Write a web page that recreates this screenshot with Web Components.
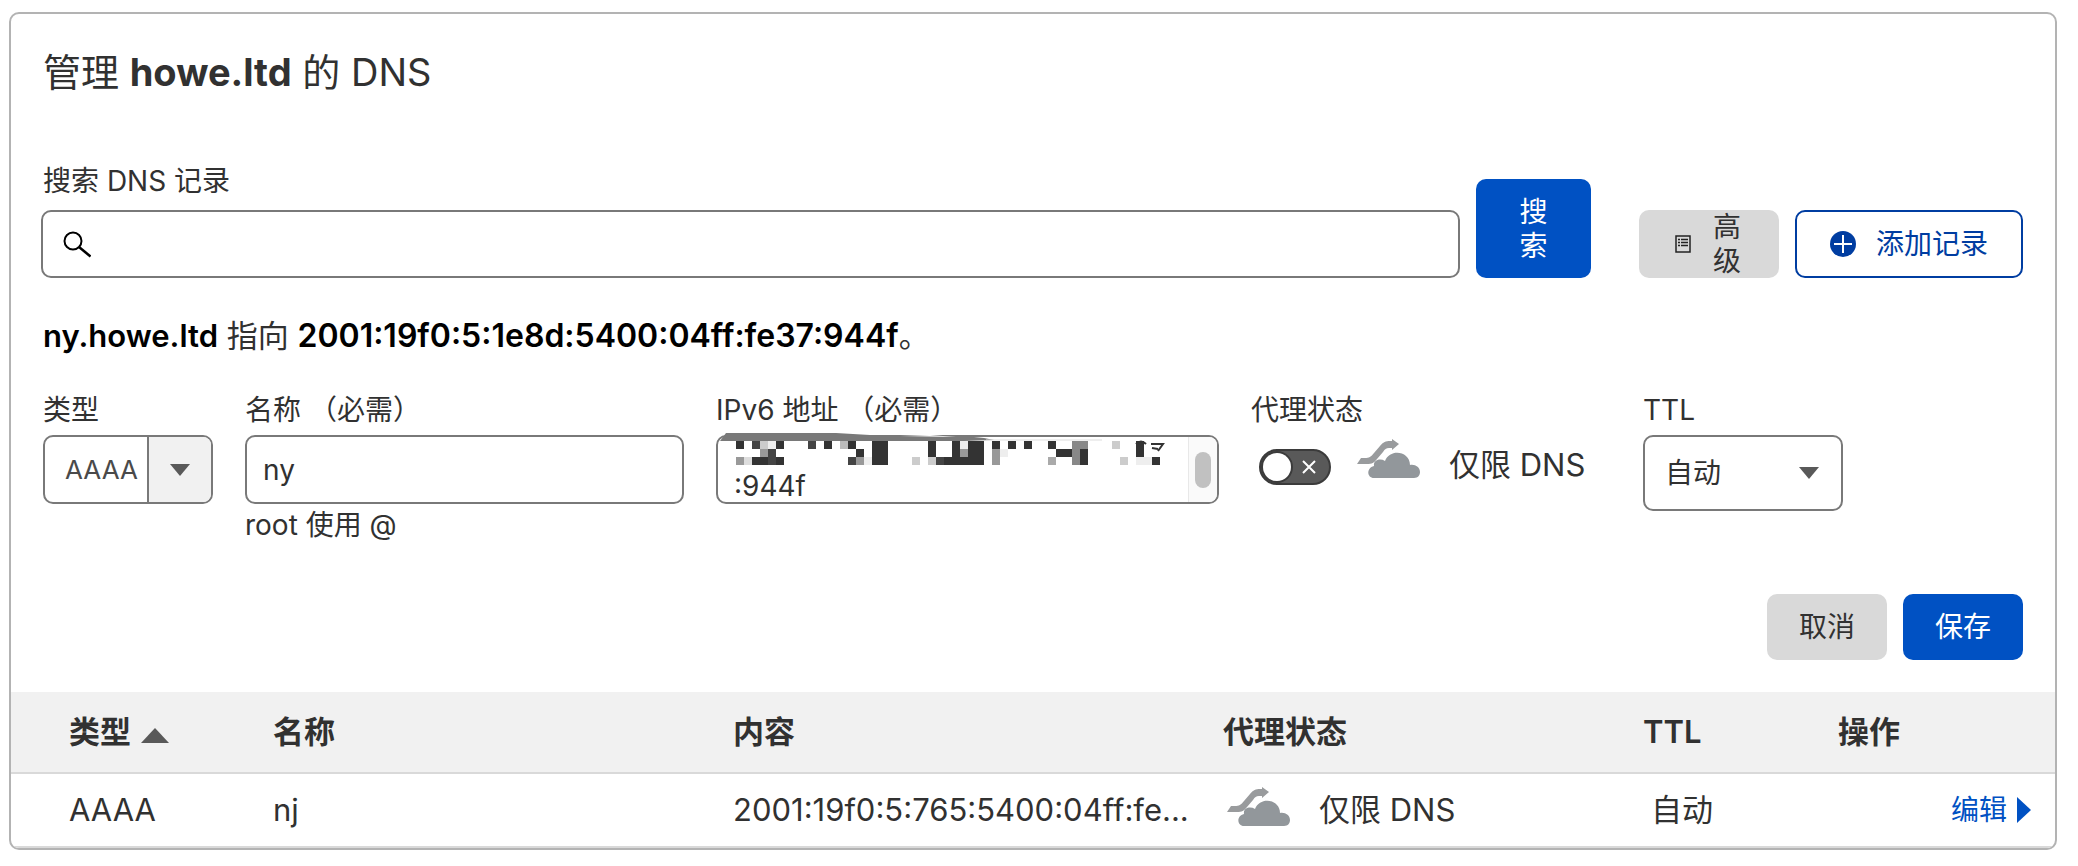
<!DOCTYPE html>
<html lang="zh-CN">
<head>
<meta charset="utf-8">
<meta name="viewport" content="width=device-width, initial-scale=1">
<title>DNS</title>
<style>
    :root {
        --text: #313131;
        --blue: #0051c3;
        --blue-dark: #003da1;
        --line: #797979;
        --grey: #d9d9d9;
        --arrow: #595959;
    }
    body {
        margin: 0;
        padding: 12px 21px 15px 9px;
        background: #fff;
        color: var(--text);
        font-family: Inter, "Noto Sans CJK SC", sans-serif;
        font-size: 28px;
        line-height: 34px;
    }
</style>
</head>
<body>
<dns-card>
    <span slot="title">管理 <b>howe.ltd</b> 的 DNS</span>
    <dns-search></dns-search>
    <record-form></record-form>
    <records-table slot="table"></records-table>
</dns-card>

<script>
class DnsCard extends HTMLElement {
    constructor() {
        super();
        this.attachShadow({mode: 'open'});
    }

    connectedCallback() {
        this.shadowRoot.innerHTML = `
            <style>
                :host {
                    display: block;
                    border: 2px solid #b3b3b3;
                    border-radius: 10px;
                    overflow: hidden;
                }
                .body {
                    padding: 32px;
                }
                h1 {
                    margin: 0 0 66px;
                    font-size: 38px;
                    line-height: 52px;
                    font-weight: 400;
                }
            </style>
            <div class="body">
                <h1><slot name="title"></slot></h1>
                <slot></slot>
            </div>
            <slot name="table"></slot>`
    }
}

class DnsButton extends HTMLElement {
    constructor() {
        super();
        this.attachShadow({mode: 'open'});
    }

    connectedCallback() {
        this.shadowRoot.innerHTML = `
            <style>
                :host {
                    display: block;
                }
                button {
                    display: flex;
                    align-items: center;
                    justify-content: center;
                    box-sizing: border-box;
                    width: 100%;
                    height: 100%;
                    padding: 0;
                    border: 0;
                    border-radius: 10px;
                    background: var(--grey);
                    color: var(--text);
                    font: inherit;
                    cursor: pointer;
                }
                :host([kind="primary"]) button {
                    background: var(--blue);
                    color: #fff;
                }
                :host([kind="outline"]) button {
                    border: 2px solid var(--blue-dark);
                    background: #fff;
                    color: var(--blue-dark);
                }
                ::slotted(svg) {
                    flex: none;
                    margin-right: 20px;
                }
            </style>
            <button type="button"><slot name="icon"></slot><slot></slot></button>`
    }
}

class DnsSearch extends HTMLElement {
    constructor() {
        super();
        this.attachShadow({mode: 'open'});
    }

    connectedCallback() {
        this.shadowRoot.innerHTML = `
            <style>
                :host {
                    display: flex;
                    align-items: flex-end;
                    gap: 16px;
                    margin: 0 0 36px -2px;
                }
                .field {
                    flex: 1;
                }
                label {
                    display: block;
                    margin: 0 0 12px 2px;
                }
                .box {
                    display: flex;
                    align-items: center;
                    gap: 16px;
                    box-sizing: border-box;
                    height: 68px;
                    padding: 0 20px;
                    border: 2px solid var(--line);
                    border-radius: 10px;
                }
                input {
                    flex: 1;
                    border: 0;
                    outline: 0;
                    font: inherit;
                    color: inherit;
                }
                .search {
                    width: 115px;
                    height: 99px;
                    margin-right: 32px;
                }
                .advanced {
                    width: 140px;
                    height: 68px;
                }
                .add {
                    width: 228px;
                    height: 68px;
                }
                .stack {
                    width: 28px;
                }
                .advanced .stack {
                    margin-right: 4px;
                }
            </style>
            <div class="field">
                <label for="query">搜索 DNS 记录</label>
                <div class="box">
                    <svg width="28" height="28" viewBox="0 0 28 28" fill="none" stroke="#000" stroke-width="2">
                        <circle cx="10" cy="11" r="8.500"/>
                        <path d="M16 17l11.500 9.500" stroke-width="2.500"/>
                    </svg>
                    <input id="query" type="text">
                </div>
            </div>
            <dns-button class="search" kind="primary"><span class="stack">搜索</span></dns-button>
            <dns-button class="advanced">
                <svg slot="icon" width="20" height="20" viewBox="0 0 20 20" fill="none" stroke="#222">
                    <rect x="3" y="2" width="14" height="16" stroke-width="1.500"/>
                    <path d="M8 5.500h7M8 8.500h7M8 11.500h7M5 5.500h2M5 8.500h2M5 11.500h2" stroke-width="1.500"/>
                </svg>
                <span class="stack">高级</span>
            </dns-button>
            <dns-button class="add" kind="outline">
                <svg slot="icon" width="26" height="26" viewBox="0 0 26 26">
                    <circle cx="13" cy="13" r="13" fill="#003da1"/>
                    <path d="M13 4v18M4 13h18" stroke="#fff" stroke-width="2"/>
                </svg>
                <span>添加记录</span>
            </dns-button>`
    }
}

class SelectField extends HTMLElement {
    constructor() {
        super();
        this.attachShadow({mode: 'open'});
    }

    connectedCallback() {
        const label = this.getAttribute('label');
        const value = this.getAttribute('value');
        this.shadowRoot.innerHTML = `
            <style>
                :host {
                    display: block;
                }
                label {
                    display: block;
                    margin-bottom: 8px;
                }
                .box {
                    display: grid;
                    grid-template-columns: 1fr 64px;
                    align-items: center;
                    box-sizing: border-box;
                    height: 76px;
                    border: 2px solid var(--line);
                    border-radius: 10px;
                    overflow: hidden;
                }
                select {
                    grid-area: 1 / 1 / 2 / 3;
                    height: 100%;
                    padding: 0 0 0 20px;
                    border: 0;
                    outline: 0;
                    appearance: none;
                    background: none;
                    color: inherit;
                    font: inherit;
                }
                .arrow {
                    grid-area: 1 / 2;
                    display: flex;
                    align-items: center;
                    justify-content: center;
                    box-sizing: border-box;
                    height: 100%;
                    pointer-events: none;
                }
                :host([split]) .box {
                    height: 69px;
                }
                :host([split]) select {
                    color: #4a4a4a;
                    font-size: 26px;
                }
                :host([split]) .arrow {
                    border-left: 2px solid var(--line);
                    background: #f1f1f1;
                }
            </style>
            <label for="choice">${label}</label>
            <div class="box">
                <select id="choice"><option>${value}</option></select>
                <span class="arrow">
                    <svg width="20" height="12" viewBox="0 0 20 12"><path d="M0 0h20L10 12z" fill="#595959"/></svg>
                </span>
            </div>`
    }
}

class NameField extends HTMLElement {
    constructor() {
        super();
        this.attachShadow({mode: 'open'});
    }

    connectedCallback() {
        this.shadowRoot.innerHTML = `
            <style>
                :host {
                    display: block;
                }
                label {
                    display: block;
                    margin-bottom: 8px;
                }
                input {
                    display: block;
                    box-sizing: border-box;
                    width: 100%;
                    height: 69px;
                    padding: 0 16px;
                    border: 2px solid var(--line);
                    border-radius: 10px;
                    outline: 0;
                    color: inherit;
                    font: inherit;
                }
                p {
                    margin: 4px 0 0;
                }
            </style>
            <label for="name">名称 （必需）</label>
            <input id="name" type="text" value="ny">
            <p>root 使用 @</p>`
    }
}

// every entry is [column, row, columns, rows, grey level] on an 8px grid
const MOSAIC = [
    [0, 0, 1, 1, '3'], [2, 0, 1, 1, '4'], [3, 0, 1, 1, 'c'], [4, 0, 1, 1, 'e'], [5, 0, 1, 1, '3'],
    [9, 0, 1, 1, '4'], [11, 0, 1, 1, '3'], [13, 0, 1, 1, 'b'], [14, 0, 1, 1, '3'], [17, 0, 2, 3, '3'],
    [24, 0, 1, 2, '3'], [27, 0, 1, 3, '3'], [28, 0, 1, 1, 'e'], [29, 0, 2, 3, '3'], [32, 0, 1, 1, '3'],
    [34, 0, 1, 1, '3'], [36, 0, 1, 1, '3'], [39, 0, 1, 1, '3'], [42, 0, 2, 1, '8'], [47, 0, 1, 1, 'c'],
    [3, 1, 1, 1, '9'], [4, 1, 1, 1, '4'], [15, 1, 1, 1, '3'], [28, 1, 1, 1, '9'], [32, 1, 1, 2, '9'],
    [33, 1, 1, 1, 'e'], [40, 1, 2, 1, '3'], [42, 1, 1, 2, '8'], [43, 1, 1, 2, '3'], [50, 0, 1, 2, '3'],
    [0, 2, 1, 1, '9'], [1, 2, 1, 1, 'd'], [2, 2, 2, 1, '3'], [4, 2, 1, 1, '4'], [5, 2, 1, 1, '3'],
    [14, 2, 1, 1, '4'], [15, 2, 1, 1, '9'], [16, 2, 1, 1, 'e'], [22, 2, 1, 1, 'c'], [24, 2, 1, 1, 'c'],
    [25, 2, 1, 1, '4'], [26, 2, 1, 1, '3'], [28, 2, 1, 1, '3'], [39, 2, 1, 1, 'a'], [48, 2, 1, 1, 'c'],
    [50, 2, 1, 1, 'e'], [51, 2, 1, 1, 'e'], [52, 2, 1, 1, '3']
];

class AddressField extends HTMLElement {
    constructor() {
        super();
        this.attachShadow({mode: 'open'});
    }

    connectedCallback() {
        const cells = MOSAIC.map(([x, y, w, h, c]) =>
            `<rect x="${20 + x * 8}" y="${8 + y * 8}" width="${w * 8}" height="${h * 8}" fill="#${c}${c}${c}"/>`
        ).join('');
        this.shadowRoot.innerHTML = `
            <style>
                :host {
                    display: block;
                }
                label {
                    display: block;
                    margin-bottom: 8px;
                }
                .box {
                    position: relative;
                    display: flex;
                    box-sizing: border-box;
                    height: 69px;
                    border: 2px solid var(--line);
                    border-radius: 10px;
                }
                textarea {
                    flex: 1;
                    min-width: 0;
                    padding: 33px 16px 0;
                    border: 0;
                    outline: 0;
                    resize: none;
                    overflow: hidden;
                    background: none;
                    color: inherit;
                    font: inherit;
                    line-height: 32px;
                }
                .bar {
                    display: flex;
                    align-items: center;
                    justify-content: center;
                    box-sizing: border-box;
                    width: 29px;
                    border-left: 1px solid #e8e8e8;
                    border-radius: 0 8px 8px 0;
                    background: #fafafa;
                }
                .thumb {
                    width: 16px;
                    height: 36px;
                    border-radius: 8px;
                    background: #c1c1c1;
                }
                .mask {
                    position: absolute;
                    top: -4px;
                    left: -2px;
                    pointer-events: none;
                }
            </style>
            <label for="address">IPv6 地址 （必需）</label>
            <div class="box">
                <textarea id="address">:944f</textarea>
                <div class="bar"><div class="thumb"></div></div>
                <svg class="mask" width="460" height="40" viewBox="0 0 460 40">
                    <path d="M4 8L10 0h110l34 2h84l30 3 10 2-30 1z" fill="#797979"/>
                    <path d="M184 3l30-1 26 2z" fill="#fff"/>
                    <path d="M270 7h116" stroke="#ddd"/>
                    ${cells}
                    <path d="M420 11q5-5 10 0M435 11h12l-5 7M436 15l6 1" fill="none" stroke="#333" stroke-width="2"/>
                </svg>
            </div>`
    }
}

class CloudIcon extends HTMLElement {
    constructor() {
        super();
        this.attachShadow({mode: 'open'});
    }

    connectedCallback() {
        this.shadowRoot.innerHTML = `
            <style>
                :host {
                    display: block;
                    flex: none;
                    width: 64px;
                    height: 40px;
                }
                svg {
                    display: block;
                }
            </style>
            <svg width="64" height="40" viewBox="0 0 64 40">
                <path d="M4 19h4c4 0 6-1 9-5l6-7c3-4 6-5 10-5h2V0l7 5-7 6V9h-3c-3 0-4 1-6 4l-6 7c-3 4-5 5-10 5H0z" fill="#999b9d"/>
                <path d="M17 39c-7 0-8-10 0-12-1-6 6-8 11-5 5-13 25-10 25 4 5-1 10 2 10 7 0 3-2 6-6 6z" fill="#92979b"/>
            </svg>`
    }
}

class ProxyField extends HTMLElement {
    constructor() {
        super();
        this.attachShadow({mode: 'open'});
    }

    connectedCallback() {
        this.shadowRoot.innerHTML = `
            <style>
                :host {
                    display: block;
                }
                label {
                    display: block;
                    margin-bottom: 8px;
                }
                .row {
                    display: flex;
                    align-items: center;
                    padding: 0 8px;
                    height: 60px;
                    font-size: 31px;
                }
                .toggle {
                    display: grid;
                    margin: 4px 26px 0 0;
                }
                .toggle > * {
                    grid-area: 1 / 1;
                }
                input {
                    appearance: none;
                    box-sizing: border-box;
                    width: 72px;
                    height: 36px;
                    margin: 0;
                    border: 2px solid #3b3b3b;
                    border-radius: 18px;
                    background: #595959;
                }
                svg {
                    pointer-events: none;
                }
                cloud-icon {
                    margin: 0 28px 12px 0;
                }
            </style>
            <label for="proxy">代理状态</label>
            <div class="row">
                <div class="toggle">
                    <input id="proxy" type="checkbox">
                    <svg width="72" height="36" viewBox="0 0 72 36">
                        <circle cx="18" cy="18" r="16" fill="#3b3b3b"/>
                        <circle cx="18" cy="18" r="14" fill="#fff"/>
                        <path d="M44 12l12 12M56 12L44 24" stroke="#fff" stroke-width="2"/>
                    </svg>
                </div>
                <cloud-icon></cloud-icon>
                <span>仅限 DNS</span>
            </div>`
    }
}

class RecordForm extends HTMLElement {
    constructor() {
        super();
        this.attachShadow({mode: 'open'});
    }

    connectedCallback() {
        this.shadowRoot.innerHTML = `
            <style>
                :host {
                    display: block;
                }
                .summary {
                    margin: 0 0 35px;
                    font-size: 31px;
                    line-height: 44px;
                }
                .summary b {
                    color: #000;
                    font-weight: 600;
                }
                .summary .address {
                    font-size: 32px;
                }
                .fields {
                    display: grid;
                    grid-template-columns: 170px 439fr 503fr 360px 200px 148px;
                    gap: 32px;
                    align-items: start;
                }
                .actions {
                    display: flex;
                    justify-content: flex-end;
                    gap: 16px;
                    margin-top: 52px;
                }
                .actions dns-button {
                    width: 120px;
                    height: 66px;
                }
            </style>
            <p class="summary"><b>ny.howe.ltd</b> 指向 <b class="address">2001:19f0:5:1e8d:5400:04ff:fe37:944f</b>。</p>
            <div class="fields">
                <select-field label="类型" value="AAAA" split></select-field>
                <name-field></name-field>
                <address-field></address-field>
                <proxy-field></proxy-field>
                <select-field label="TTL" value="自动"></select-field>
            </div>
            <div class="actions">
                <dns-button>取消</dns-button>
                <dns-button kind="primary">保存</dns-button>
            </div>`
    }
}

class RecordsTable extends HTMLElement {
    constructor() {
        super();
        this.attachShadow({mode: 'open'});
    }

    connectedCallback() {
        this.shadowRoot.innerHTML = `
            <style>
                :host {
                    display: block;
                }
                table {
                    width: 100%;
                    table-layout: fixed;
                    border-collapse: separate;
                    border-spacing: 0;
                    font-size: 31px;
                }
                th, td {
                    box-sizing: border-box;
                    padding: 0;
                    border-bottom: 2px solid #d9d9d9;
                    text-align: left;
                    white-space: nowrap;
                }
                th {
                    height: 82px;
                    background: #f1f1f1;
                    font-weight: 600;
                }
                td {
                    height: 74px;
                }
                th:first-child, td:first-child {
                    width: 262px;
                    padding-left: 58px;
                }
                th:first-child svg {
                    margin-left: 2px;
                }
                th:nth-child(3) {
                    width: 490px;
                }
                th:nth-child(4) {
                    width: 420px;
                }
                th:nth-child(5) {
                    width: 195px;
                }
                th:nth-child(6) {
                    width: 217px;
                }
                .status {
                    display: flex;
                    align-items: center;
                    gap: 28px;
                    padding-left: 4px;
                }
                .status cloud-icon {
                    margin-bottom: 6px;
                }
                .ttl {
                    padding-left: 8px;
                }
                .edit {
                    padding-right: 24px;
                    text-align: right;
                    font-size: 28px;
                }
                a {
                    display: inline-flex;
                    align-items: center;
                    gap: 10px;
                    color: var(--blue);
                    text-decoration: none;
                }
            </style>
            <table>
                <thead>
                    <tr>
                        <th>类型 <svg width="28" height="15" viewBox="0 0 28 15"><path d="M14 0l14 15H0z" fill="#595959"/></svg></th>
                        <th>名称</th>
                        <th>内容</th>
                        <th>代理状态</th>
                        <th>TTL</th>
                        <th>操作</th>
                    </tr>
                </thead>
                <tbody>
                    <tr>
                        <td>AAAA</td>
                        <td>nj</td>
                        <td>2001:19f0:5:765:5400:04ff:fe...</td>
                        <td><div class="status"><cloud-icon></cloud-icon><span>仅限 DNS</span></div></td>
                        <td class="ttl">自动</td>
                        <td class="edit"><a href="#edit">编辑 <svg width="14" height="26" viewBox="0 0 14 26"><path d="M0 0l14 13L0 26z" fill="#0051c3"/></svg></a></td>
                    </tr>
                </tbody>
            </table>`
    }
}

customElements.define('cloud-icon', CloudIcon);
customElements.define('dns-button', DnsButton);
customElements.define('select-field', SelectField);
customElements.define('name-field', NameField);
customElements.define('address-field', AddressField);
customElements.define('proxy-field', ProxyField);
customElements.define('dns-search', DnsSearch);
customElements.define('record-form', RecordForm);
customElements.define('records-table', RecordsTable);
customElements.define('dns-card', DnsCard);
</script>
</body>
</html>
